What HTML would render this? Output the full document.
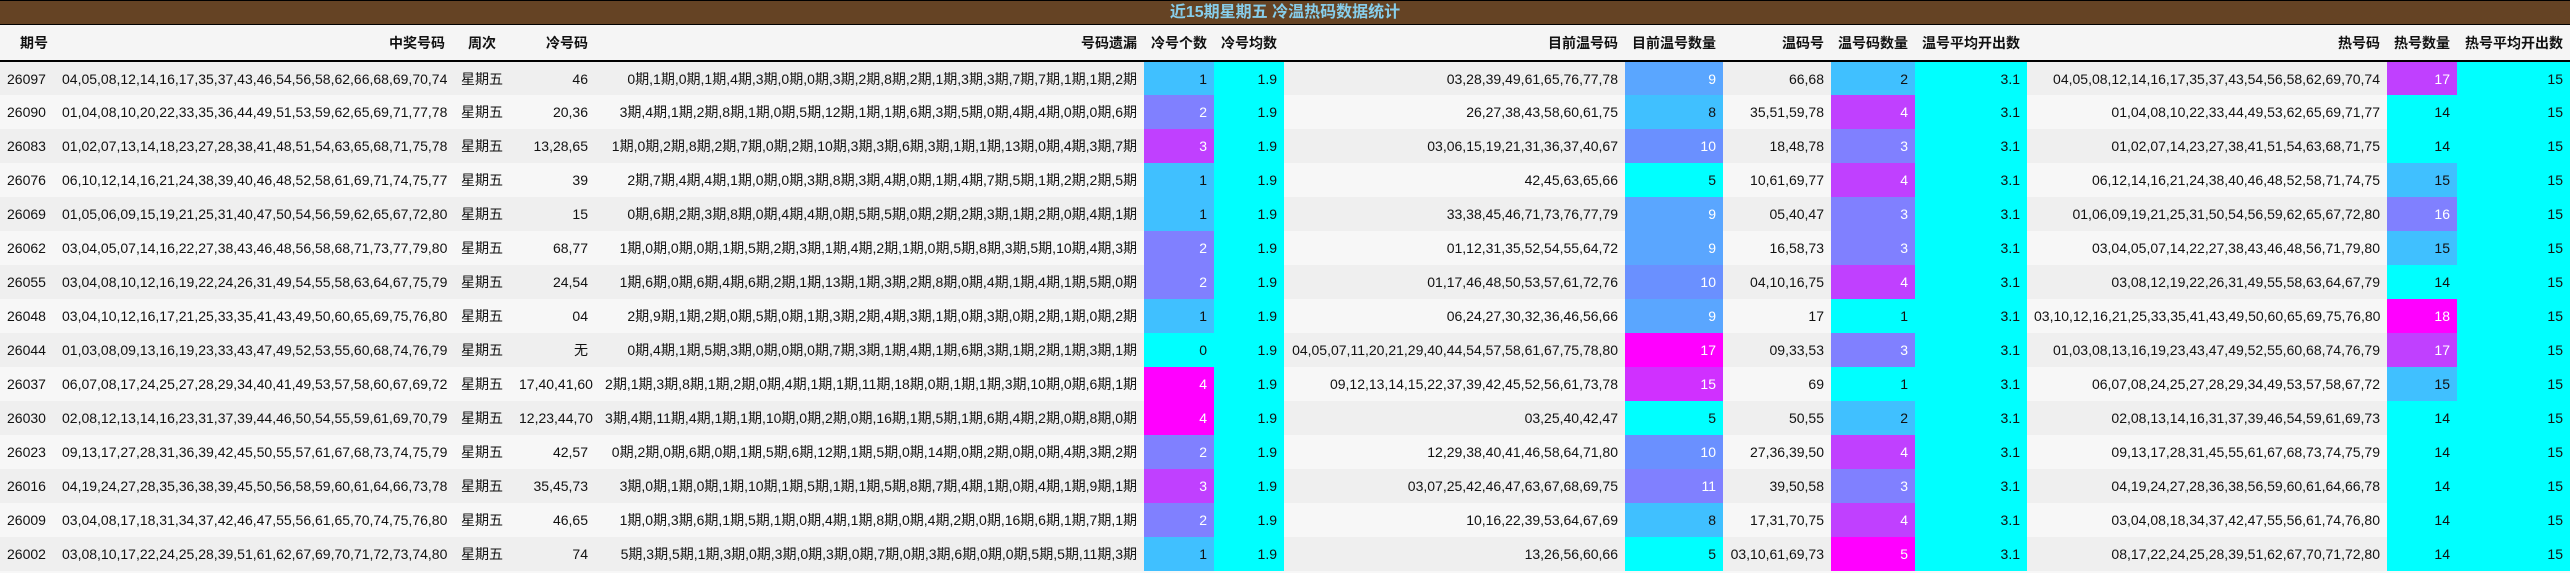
<!DOCTYPE html>
<html><head><meta charset="utf-8"><style>
*{margin:0;padding:0;box-sizing:border-box}
body{width:2570px;height:573px;background:#f7f7f7;font-family:"Liberation Sans","Noto Sans CJK SC",sans-serif;font-size:14px;color:#111;overflow:hidden}
.t{height:25px;background:#654324;border-top:1px solid #000;border-bottom:1px solid #000;color:#87ceeb;font-weight:bold;font-size:16px;text-align:center;line-height:23px}
table{border-collapse:collapse;table-layout:fixed;width:2570px}
th{height:36px;background:#f5f5f5;font-weight:bold;text-align:right;padding:0 7px;border-bottom:2px solid #000;white-space:nowrap;color:#111}
td{height:34px;text-align:right;padding:0 7px;white-space:nowrap;overflow:hidden}
tr:nth-child(odd) td{background:#f7f7f7}
tr:nth-child(even) td{background:#efefef}
td:first-child{text-align:left;padding-left:7px}
th:first-child{text-align:left;padding-left:20px}
td:nth-child(3){text-align:center}th:nth-child(3){text-align:center}
tr td.c{background:#00ffff}
tr td.b{background:#40c0ff}
tr td.b9{background:#5aa6ff;color:#fff}
tr td.b10{background:#6a90ff;color:#fff}
tr td.p{background:#8080ff;color:#fff}
tr td.v{background:#c040ff;color:#fff}
tr td.v15{background:#d030ff;color:#fff}
tr td.m{background:#ff00ff;color:#fff}
</style></head><body>
<div class="t">近15期星期五 冷温热码数据统计</div>
<table>
<colgroup><col style="width:55px"><col style="width:397px"><col style="width:60px"><col style="width:83px"><col style="width:549px"><col style="width:70px"><col style="width:70px"><col style="width:341px"><col style="width:98px"><col style="width:108px"><col style="width:84px"><col style="width:112px"><col style="width:360px"><col style="width:70px"><col style="width:113px"></colgroup>
<tr><th>期号</th><th>中奖号码</th><th>周次</th><th>冷号码</th><th>号码遗漏</th><th>冷号个数</th><th>冷号均数</th><th>目前温号码</th><th>目前温号数量</th><th>温码号</th><th>温号码数量</th><th>温号平均开出数</th><th>热号码</th><th>热号数量</th><th>热号平均开出数</th></tr>
<tr><td>26097</td><td>04,05,08,12,14,16,17,35,37,43,46,54,56,58,62,66,68,69,70,74</td><td>星期五</td><td>46</td><td>0期,1期,0期,1期,4期,3期,0期,0期,3期,2期,8期,2期,1期,3期,3期,7期,7期,1期,1期,2期</td><td class="b">1</td><td class="c">1.9</td><td>03,28,39,49,61,65,76,77,78</td><td class="b9">9</td><td>66,68</td><td class="b">2</td><td class="c">3.1</td><td>04,05,08,12,14,16,17,35,37,43,54,56,58,62,69,70,74</td><td class="v">17</td><td class="c">15</td></tr>
<tr><td>26090</td><td>01,04,08,10,20,22,33,35,36,44,49,51,53,59,62,65,69,71,77,78</td><td>星期五</td><td>20,36</td><td>3期,4期,1期,2期,8期,1期,0期,5期,12期,1期,1期,6期,3期,5期,0期,4期,4期,0期,0期,6期</td><td class="p">2</td><td class="c">1.9</td><td>26,27,38,43,58,60,61,75</td><td class="b">8</td><td>35,51,59,78</td><td class="v">4</td><td class="c">3.1</td><td>01,04,08,10,22,33,44,49,53,62,65,69,71,77</td><td class="c">14</td><td class="c">15</td></tr>
<tr><td>26083</td><td>01,02,07,13,14,18,23,27,28,38,41,48,51,54,63,65,68,71,75,78</td><td>星期五</td><td>13,28,65</td><td>1期,0期,2期,8期,2期,7期,0期,2期,10期,3期,3期,6期,3期,1期,1期,13期,0期,4期,3期,7期</td><td class="v">3</td><td class="c">1.9</td><td>03,06,15,19,21,31,36,37,40,67</td><td class="b10">10</td><td>18,48,78</td><td class="p">3</td><td class="c">3.1</td><td>01,02,07,14,23,27,38,41,51,54,63,68,71,75</td><td class="c">14</td><td class="c">15</td></tr>
<tr><td>26076</td><td>06,10,12,14,16,21,24,38,39,40,46,48,52,58,61,69,71,74,75,77</td><td>星期五</td><td>39</td><td>2期,7期,4期,4期,1期,0期,0期,3期,8期,3期,4期,0期,1期,4期,7期,5期,1期,2期,2期,5期</td><td class="b">1</td><td class="c">1.9</td><td>42,45,63,65,66</td><td class="c">5</td><td>10,61,69,77</td><td class="v">4</td><td class="c">3.1</td><td>06,12,14,16,21,24,38,40,46,48,52,58,71,74,75</td><td class="b">15</td><td class="c">15</td></tr>
<tr><td>26069</td><td>01,05,06,09,15,19,21,25,31,40,47,50,54,56,59,62,65,67,72,80</td><td>星期五</td><td>15</td><td>0期,6期,2期,3期,8期,0期,4期,4期,0期,5期,5期,0期,2期,2期,3期,1期,2期,0期,4期,1期</td><td class="b">1</td><td class="c">1.9</td><td>33,38,45,46,71,73,76,77,79</td><td class="b9">9</td><td>05,40,47</td><td class="p">3</td><td class="c">3.1</td><td>01,06,09,19,21,25,31,50,54,56,59,62,65,67,72,80</td><td class="p">16</td><td class="c">15</td></tr>
<tr><td>26062</td><td>03,04,05,07,14,16,22,27,38,43,46,48,56,58,68,71,73,77,79,80</td><td>星期五</td><td>68,77</td><td>1期,0期,0期,0期,1期,5期,2期,3期,1期,4期,2期,1期,0期,5期,8期,3期,5期,10期,4期,3期</td><td class="p">2</td><td class="c">1.9</td><td>01,12,31,35,52,54,55,64,72</td><td class="b9">9</td><td>16,58,73</td><td class="p">3</td><td class="c">3.1</td><td>03,04,05,07,14,22,27,38,43,46,48,56,71,79,80</td><td class="b">15</td><td class="c">15</td></tr>
<tr><td>26055</td><td>03,04,08,10,12,16,19,22,24,26,31,49,54,55,58,63,64,67,75,79</td><td>星期五</td><td>24,54</td><td>1期,6期,0期,6期,4期,6期,2期,1期,13期,1期,3期,2期,8期,0期,4期,1期,4期,1期,5期,0期</td><td class="p">2</td><td class="c">1.9</td><td>01,17,46,48,50,53,57,61,72,76</td><td class="b10">10</td><td>04,10,16,75</td><td class="v">4</td><td class="c">3.1</td><td>03,08,12,19,22,26,31,49,55,58,63,64,67,79</td><td class="c">14</td><td class="c">15</td></tr>
<tr><td>26048</td><td>03,04,10,12,16,17,21,25,33,35,41,43,49,50,60,65,69,75,76,80</td><td>星期五</td><td>04</td><td>2期,9期,1期,2期,0期,5期,0期,1期,3期,2期,4期,3期,1期,0期,3期,0期,2期,1期,0期,2期</td><td class="b">1</td><td class="c">1.9</td><td>06,24,27,30,32,36,46,56,66</td><td class="b9">9</td><td>17</td><td class="c">1</td><td class="c">3.1</td><td>03,10,12,16,21,25,33,35,41,43,49,50,60,65,69,75,76,80</td><td class="m">18</td><td class="c">15</td></tr>
<tr><td>26044</td><td>01,03,08,09,13,16,19,23,33,43,47,49,52,53,55,60,68,74,76,79</td><td>星期五</td><td>无</td><td>0期,4期,1期,5期,3期,0期,0期,0期,7期,3期,1期,4期,1期,6期,3期,1期,2期,1期,3期,1期</td><td class="c">0</td><td class="c">1.9</td><td>04,05,07,11,20,21,29,40,44,54,57,58,61,67,75,78,80</td><td class="m">17</td><td>09,33,53</td><td class="p">3</td><td class="c">3.1</td><td>01,03,08,13,16,19,23,43,47,49,52,55,60,68,74,76,79</td><td class="v">17</td><td class="c">15</td></tr>
<tr><td>26037</td><td>06,07,08,17,24,25,27,28,29,34,40,41,49,53,57,58,60,67,69,72</td><td>星期五</td><td>17,40,41,60</td><td>2期,1期,3期,8期,1期,2期,0期,4期,1期,1期,11期,18期,0期,1期,1期,3期,10期,0期,6期,1期</td><td class="m">4</td><td class="c">1.9</td><td>09,12,13,14,15,22,37,39,42,45,52,56,61,73,78</td><td class="v15">15</td><td>69</td><td class="c">1</td><td class="c">3.1</td><td>06,07,08,24,25,27,28,29,34,49,53,57,58,67,72</td><td class="b">15</td><td class="c">15</td></tr>
<tr><td>26030</td><td>02,08,12,13,14,16,23,31,37,39,44,46,50,54,55,59,61,69,70,79</td><td>星期五</td><td>12,23,44,70</td><td>3期,4期,11期,4期,1期,1期,10期,0期,2期,0期,16期,1期,5期,1期,6期,4期,2期,0期,8期,0期</td><td class="m">4</td><td class="c">1.9</td><td>03,25,40,42,47</td><td class="c">5</td><td>50,55</td><td class="b">2</td><td class="c">3.1</td><td>02,08,13,14,16,31,37,39,46,54,59,61,69,73</td><td class="c">14</td><td class="c">15</td></tr>
<tr><td>26023</td><td>09,13,17,27,28,31,36,39,42,45,50,55,57,61,67,68,73,74,75,79</td><td>星期五</td><td>42,57</td><td>0期,2期,0期,6期,0期,1期,5期,6期,12期,1期,5期,0期,14期,0期,2期,0期,0期,4期,3期,2期</td><td class="p">2</td><td class="c">1.9</td><td>12,29,38,40,41,46,58,64,71,80</td><td class="b10">10</td><td>27,36,39,50</td><td class="v">4</td><td class="c">3.1</td><td>09,13,17,28,31,45,55,61,67,68,73,74,75,79</td><td class="c">14</td><td class="c">15</td></tr>
<tr><td>26016</td><td>04,19,24,27,28,35,36,38,39,45,50,56,58,59,60,61,64,66,73,78</td><td>星期五</td><td>35,45,73</td><td>3期,0期,1期,0期,1期,10期,1期,5期,1期,1期,5期,8期,7期,4期,1期,0期,4期,1期,9期,1期</td><td class="v">3</td><td class="c">1.9</td><td>03,07,25,42,46,47,63,67,68,69,75</td><td class="p">11</td><td>39,50,58</td><td class="p">3</td><td class="c">3.1</td><td>04,19,24,27,28,36,38,56,59,60,61,64,66,78</td><td class="c">14</td><td class="c">15</td></tr>
<tr><td>26009</td><td>03,04,08,17,18,31,34,37,42,46,47,55,56,61,65,70,74,75,76,80</td><td>星期五</td><td>46,65</td><td>1期,0期,3期,6期,1期,5期,1期,0期,4期,1期,8期,0期,4期,2期,0期,16期,6期,1期,7期,1期</td><td class="p">2</td><td class="c">1.9</td><td>10,16,22,39,53,64,67,69</td><td class="b">8</td><td>17,31,70,75</td><td class="v">4</td><td class="c">3.1</td><td>03,04,08,18,34,37,42,47,55,56,61,74,76,80</td><td class="c">14</td><td class="c">15</td></tr>
<tr><td>26002</td><td>03,08,10,17,22,24,25,28,39,51,61,62,67,69,70,71,72,73,74,80</td><td>星期五</td><td>74</td><td>5期,3期,5期,1期,3期,0期,3期,0期,3期,0期,7期,0期,3期,6期,0期,0期,5期,5期,11期,3期</td><td class="b">1</td><td class="c">1.9</td><td>13,26,56,60,66</td><td class="c">5</td><td>03,10,61,69,73</td><td class="m">5</td><td class="c">3.1</td><td>08,17,22,24,25,28,39,51,62,67,70,71,72,80</td><td class="c">14</td><td class="c">15</td></tr>
</table>
</body></html>
